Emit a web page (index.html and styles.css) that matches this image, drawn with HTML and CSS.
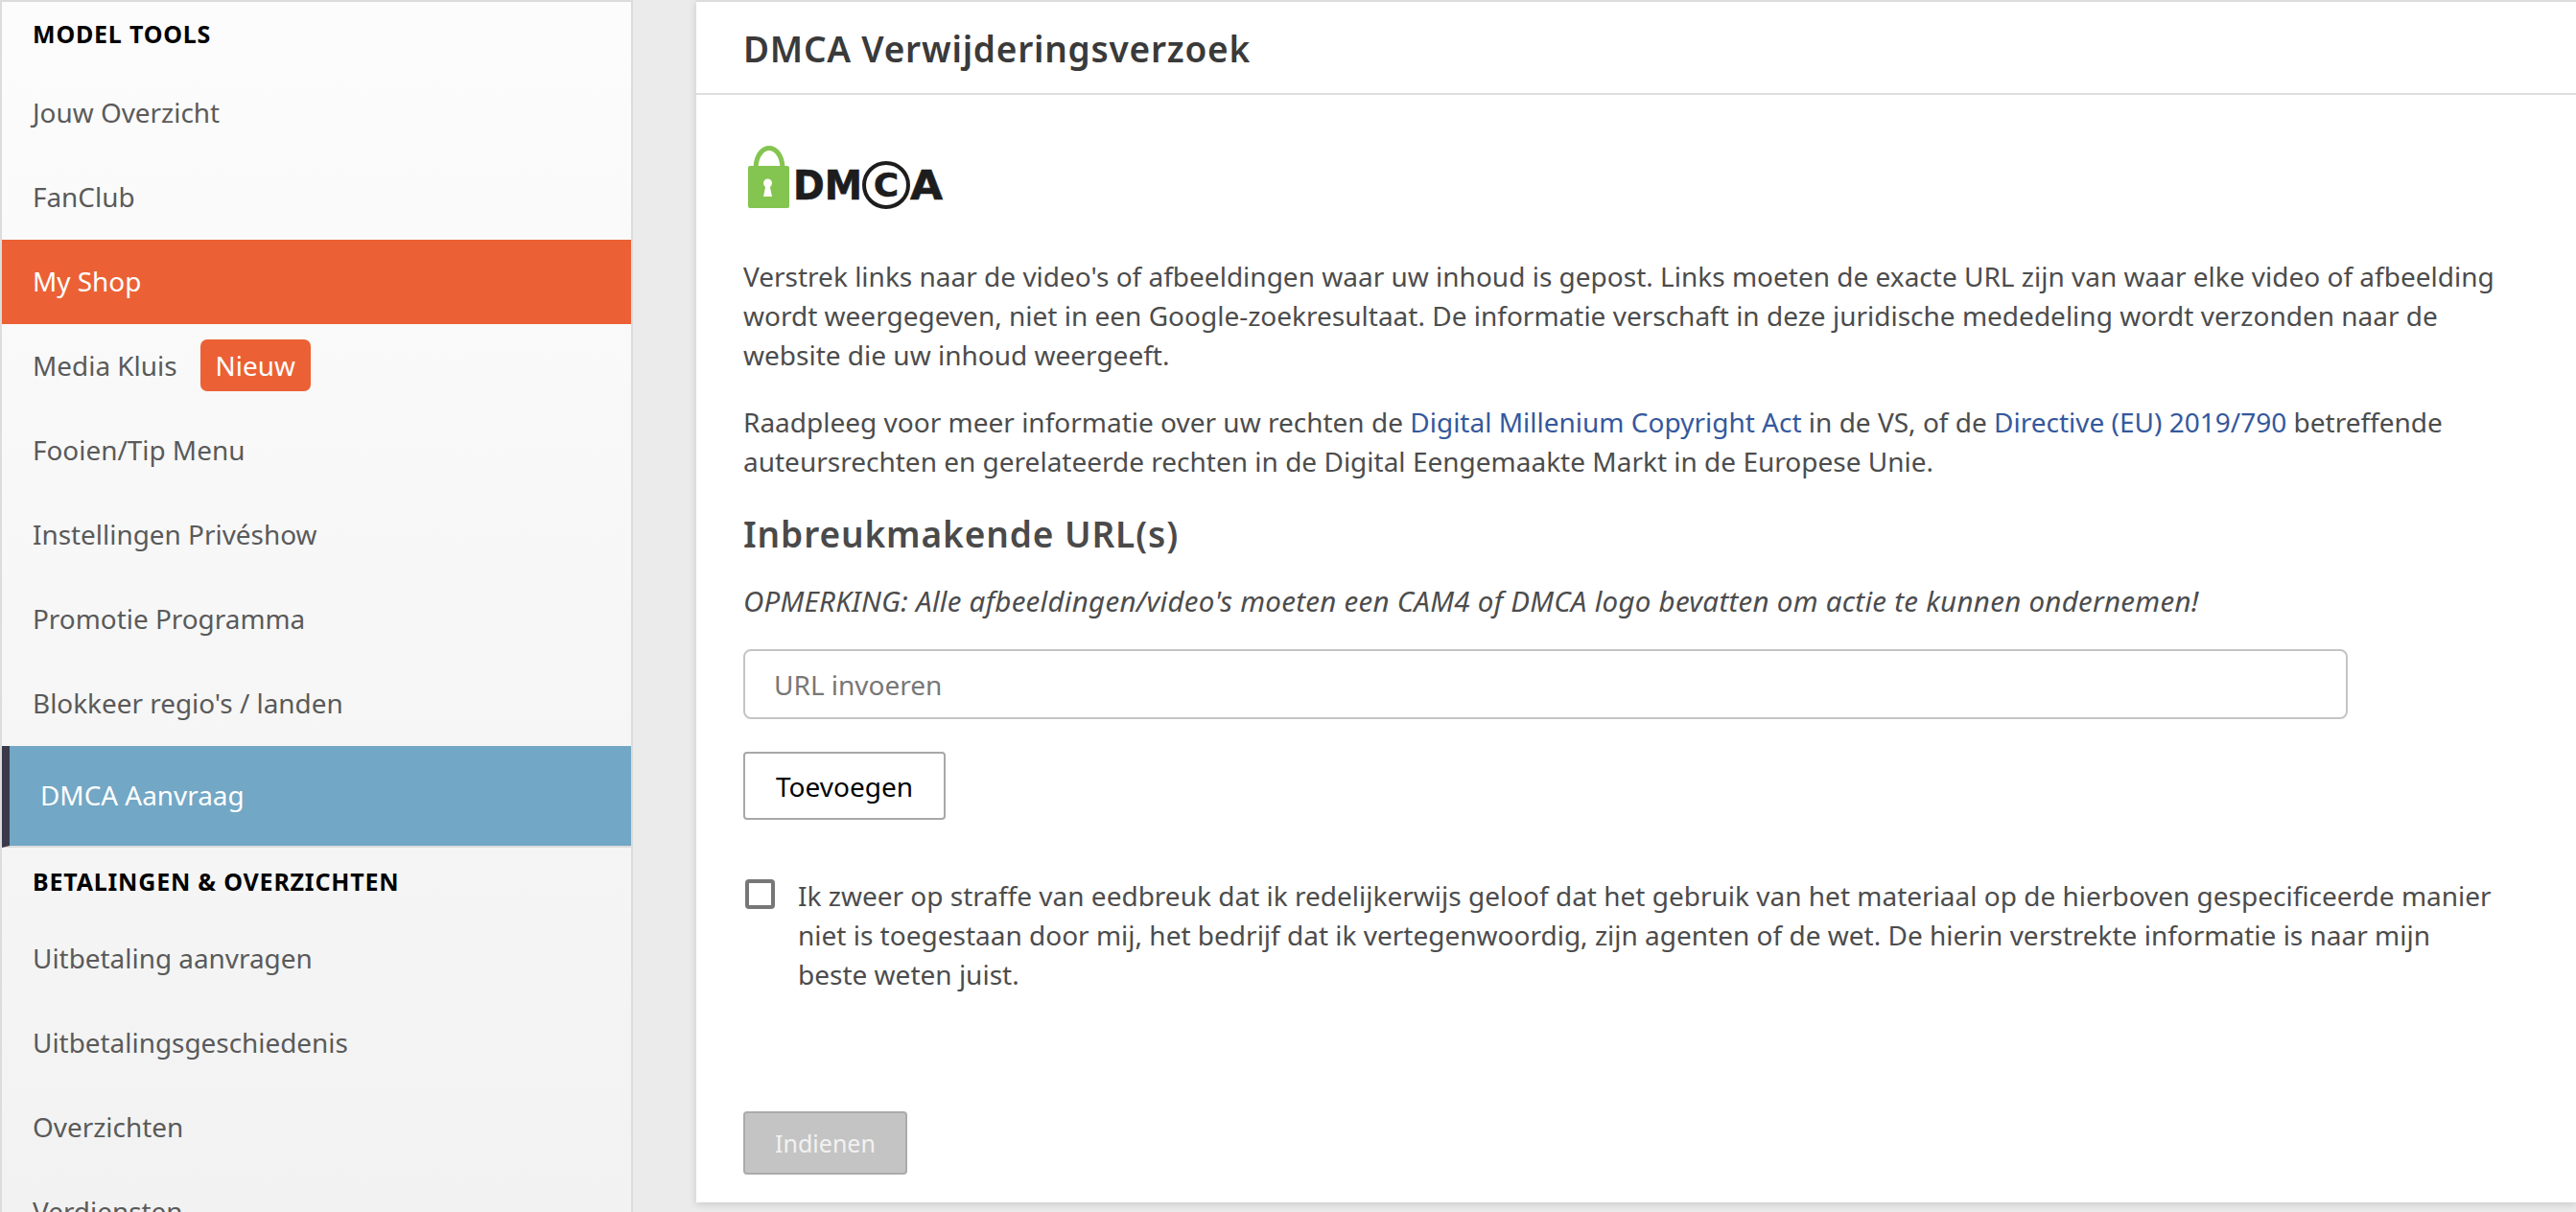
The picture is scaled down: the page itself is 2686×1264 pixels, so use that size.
FILE: index.html
```html
<!DOCTYPE html>
<html lang="nl">

<head>
    <meta charset="UTF-8">
    <meta name="viewport" content="width=device-width, initial-scale=1.0">
    <title>DMCA Verwijderingsverzoek</title>
    <link rel="stylesheet" href="styles.css">
</head>

<body>
    <div class="sidebar">
        <div class="sidehead">Model Tools</div>
        <a class="sideitem">Jouw Overzicht</a>
        <a class="sideitem">FanClub</a>
        <a class="sideitem shop">My Shop</a>
        <a class="sideitem">Media Kluis <span class="badge">Nieuw</span></a>
        <a class="sideitem">Fooien/Tip Menu</a>
        <a class="sideitem">Instellingen Privéshow</a>
        <a class="sideitem">Promotie Programma</a>
        <a class="sideitem">Blokkeer regio's / landen</a>
        <a class="sideitem current">DMCA Aanvraag</a>
        <div class="sidehead second">Betalingen &amp; Overzichten</div>
        <a class="sideitem">Uitbetaling aanvragen</a>
        <a class="sideitem">Uitbetalingsgeschiedenis</a>
        <a class="sideitem">Overzichten</a>
        <a class="sideitem">Verdiensten</a>
    </div>

    <div class="panel">
        <h1 class="paneltitle">DMCA Verwijderingsverzoek</h1>
        <div class="panelbody">
            <svg class="logo" width="220" height="75" viewBox="0 0 220 75">
                <path d="M14 27 C16 1 40 1 42 27" fill="none" stroke="#84c450" stroke-width="5" />
                <rect x="6" y="26" width="43" height="44" rx="2" fill="#84c450" />
                <circle cx="26.500" cy="44" r="4.500" fill="#fff" />
                <path d="M24.500 46 L22 58 H31 L28.500 46 Z" fill="#fff" />
                <text class="logotext" x="53" y="61" textLength="72" lengthAdjust="spacingAndGlyphs">DM</text>
                <circle cx="150" cy="46" r="23" fill="none" stroke="#1d1d1d" stroke-width="4" />
                <text class="logotext logoc" x="137" y="58" textLength="26" lengthAdjust="spacingAndGlyphs">C</text>
                <text class="logotext" x="175" y="61" textLength="34" lengthAdjust="spacingAndGlyphs">A</text>
            </svg>

            <p class="text">Verstrek links naar de video's of afbeeldingen waar uw inhoud is gepost. Links moeten de exacte URL zijn van waar elke video of afbeelding wordt weergegeven, niet in een Google-zoekresultaat. De informatie verschaft in deze juridische mededeling wordt verzonden naar de website die uw inhoud weergeeft.</p>
            <p class="text">Raadpleeg voor meer informatie over uw rechten de <a class="link">Digital Millenium Copyright Act</a> in de VS, of de <a class="link">Directive (EU) 2019/790</a> betreffende auteursrechten en gerelateerde rechten in de Digital Eengemaakte Markt in de Europese Unie.</p>

            <h2 class="subtitle">Inbreukmakende URL(s)</h2>
            <p class="note">OPMERKING: Alle afbeeldingen/video's moeten een CAM4 of DMCA logo bevatten om actie te kunnen ondernemen!</p>

            <input class="urlinput" type="text" placeholder="URL invoeren">
            <button class="addbtn">Toevoegen</button>

            <label class="agree">
                <input class="agreebox" type="checkbox">
                <span class="agreetext">Ik zweer op straffe van eedbreuk dat ik redelijkerwijs geloof dat het gebruik van het materiaal op de hierboven gespecificeerde manier niet is toegestaan door mij, het bedrijf dat ik vertegenwoordig, zijn agenten of de wet. De hierin verstrekte informatie is naar mijn beste weten juist.</span>
            </label>

            <button class="submitbtn">Indienen</button>
        </div>
    </div>
</body>

</html>
```

FILE: styles.css
```css
* {
    margin: 0;
    padding: 0;
    box-sizing: border-box;
}

html,
body {
    height: 1264px;
    overflow: hidden;
}

body {
    display: flex;
    align-items: flex-start;
    background-color: #ebebeb;
    font-family: "Noto Sans", sans-serif;
    font-size: 28px;
    color: #4c4c4c;
}

.sidebar {
    width: 660px;
    height: 1264px;
    flex-shrink: 0;
    overflow: hidden;
    border: 2px solid #dcdcdc;
    border-bottom: none;
    background: linear-gradient(#fcfcfc, #f2f2f2);
}

.sidehead {
    height: 72px;
    padding: 16px 0 0 32px;
    font-size: 25px;
    font-weight: bold;
    color: #000;
    text-transform: uppercase;
    letter-spacing: 0.8px;
}

.sidehead.second {
    height: 72px;
    padding-top: 18px;
}

.sideitem {
    display: flex;
    align-items: center;
    height: 88px;
    padding-left: 32px;
    padding-bottom: 2px;
    font-size: 27.900px;
    color: #5a5a5a;
}

.shop {
    background-color: #eb6135;
    color: #fff;
}

.badge {
    margin-left: 24px;
    padding: 8px 16px;
    border-radius: 7px;
    background-color: #eb6135;
    color: #fff;
}

.current {
    height: 106px;
    padding-left: 32px;
    padding-bottom: 2px;
    border-left: 8px solid #3a3a4a;
    border-bottom: 2px solid #dcdcdc;
    background-color: #72a7c5;
    background-clip: padding-box;
    color: #fff;
}

.panel {
    width: 1960px;
    height: 1254px;
    margin-left: 66px;
    background-color: #fff;
    border-top: 2px solid #dcdcdc;
    box-shadow: 0 2px 8px rgba(0, 0, 0, 0.15);
}

.paneltitle {
    height: 97px;
    padding: 23px 0 0 49px;
    border-bottom: 2px solid #dfdfdf;
    font-size: 37px;
    font-weight: 600;
    letter-spacing: 0.760px;
    color: #3a3a3a;
}

.panelbody {
    padding: 48px 49px 0;
}

.logo {
    display: block;
    margin: 0 0 46px -1px;
}

.logotext {
    font-family: "DejaVu Sans", sans-serif;
    font-size: 42px;
    font-weight: bold;
    fill: #1d1d1d;
    stroke: #1d1d1d;
    stroke-width: 0.700px;
}

.logoc {
    font-size: 34px;
}

.text {
    margin-bottom: 29px;
    line-height: 41px;
}

.link {
    color: #35589c;
}

.subtitle {
    margin: 0 0 24px;
    font-size: 37px;
    font-weight: 600;
    letter-spacing: 0.900px;
    color: #4a4a4a;
}

.note {
    font-size: 29.500px;
    font-style: italic;
    letter-spacing: 0.270px;
    line-height: 41px;
}

.urlinput {
    display: block;
    width: 1673px;
    height: 73px;
    margin-top: 30px;
    padding: 0 30px;
    border: 2px solid #c4c4c4;
    border-radius: 8px;
    font-family: inherit;
    font-size: 28px;
}

.urlinput::placeholder {
    color: #777;
}

.addbtn {
    display: block;
    width: 211px;
    height: 71px;
    margin-top: 34px;
    border: 2px solid #a8a8a8;
    border-radius: 4px;
    background-color: #fff;
    font-family: inherit;
    font-size: 28px;
    color: #000;
}

.agree {
    display: flex;
    gap: 24px;
    margin-top: 57px;
    padding-right: 34px;
    line-height: 41px;
}

.agreetext {
    padding-top: 2px;
}

.agreebox {
    appearance: none;
    width: 31px;
    height: 31px;
    flex-shrink: 0;
    margin: 5px 0 0 2px;
    border: 4px solid #777;
    border-radius: 4px;
    background-color: #fff;
}

.submitbtn {
    display: block;
    width: 171px;
    height: 66px;
    margin-top: 122px;
    border: 2px solid #ababab;
    border-radius: 4px;
    background-color: #c4c4c4;
    font-family: inherit;
    font-size: 25px;
    color: #f2f2f2;
}
```
